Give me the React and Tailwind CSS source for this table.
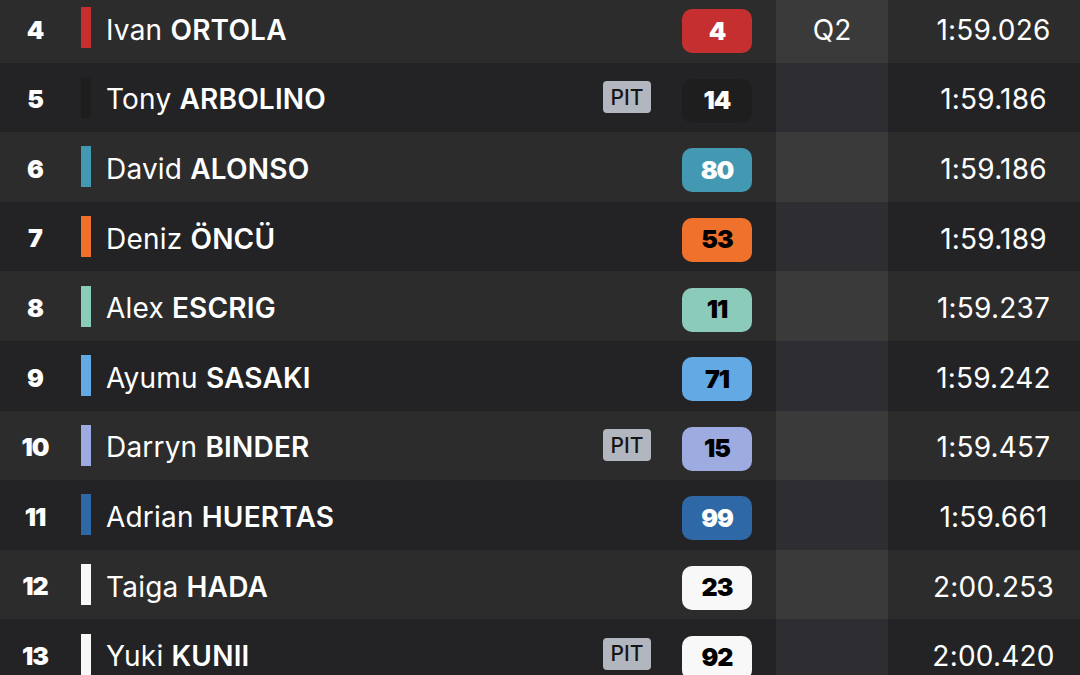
import React from "react";

const rows = [
  { pos: "4", first: "Ivan", last: "ORTOLA", num: "4", bar: "bg-[#c62f2f]", badge: "bg-[#c62f2f] text-white", pit: false, q: "Q2", time: "1:59.026" },
  { pos: "5", first: "Tony", last: "ARBOLINO", num: "14", bar: "bg-[#1e1e1f]", badge: "bg-[#1e1e1f] text-white", pit: true, q: "", time: "1:59.186" },
  { pos: "6", first: "David", last: "ALONSO", num: "80", bar: "bg-[#4499b2]", badge: "bg-[#4499b2] text-white", pit: false, q: "", time: "1:59.186" },
  { pos: "7", first: "Deniz", last: "ÖNCÜ", num: "53", bar: "bg-[#ef712b]", badge: "bg-[#ef712b] text-black", pit: false, q: "", time: "1:59.189" },
  { pos: "8", first: "Alex", last: "ESCRIG", num: "11", bar: "bg-[#8accb9]", badge: "bg-[#8accb9] text-black", pit: false, q: "", time: "1:59.237" },
  { pos: "9", first: "Ayumu", last: "SASAKI", num: "71", bar: "bg-[#63aae4]", badge: "bg-[#63aae4] text-black", pit: false, q: "", time: "1:59.242" },
  { pos: "10", first: "Darryn", last: "BINDER", num: "15", bar: "bg-[#9eabe0]", badge: "bg-[#9eabe0] text-black", pit: true, q: "", time: "1:59.457" },
  { pos: "11", first: "Adrian", last: "HUERTAS", num: "99", bar: "bg-[#2e68a6]", badge: "bg-[#2e68a6] text-white", pit: false, q: "", time: "1:59.661" },
  { pos: "12", first: "Taiga", last: "HADA", num: "23", bar: "bg-[#f8f8f8]", badge: "bg-[#f8f8f8] text-black", pit: false, q: "", time: "2:00.253" },
  { pos: "13", first: "Yuki", last: "KUNII", num: "92", bar: "bg-[#f8f8f8]", badge: "bg-[#f8f8f8] text-black", pit: true, q: "", time: "2:00.420" },
];

export default function App() {
  return (
    <div className="w-[1080px] h-[675px] overflow-hidden bg-[#232325] font-['Inter',sans-serif] text-white">
      <div className="-mt-[7px] flex flex-col">
        {rows.map((r, i) => {
          const light = i % 2 === 0;
          return (
            <div
              key={r.pos}
              className={`flex h-[69.6px] items-center ${light ? "bg-[#2c2c2c]" : "bg-[#232325]"}`}
            >
              <div className="w-[70px] shrink-0 text-center text-[25px] font-black tracking-[-1px] pt-[5px]">
                {r.pos}
              </div>
              <div className={`ml-[11px] w-[10px] h-[41px] shrink-0 ${r.bar}`} />
              <div className="ml-[15px] flex-1 min-w-0 pt-[4px] text-[28px] leading-none tracking-[0.2px] whitespace-nowrap">
                <span className="font-normal">{r.first} </span>
                <span className="font-semibold">{r.last}</span>
              </div>
              <div className="w-[48px] shrink-0 flex justify-center">
                {r.pit && (
                  <div className="w-[48px] h-[32px] rounded-[4px] bg-[#b2b7bf] text-[#151515] text-[21px] font-medium flex items-center justify-center">
                    PIT
                  </div>
                )}
              </div>
              <div
                className={`ml-[31px] mt-[7px] w-[70px] h-[44px] shrink-0 rounded-[10px] flex items-center justify-center text-[25px] font-black tracking-[-1px] ${r.badge}`}
              >
                {r.num}
              </div>
              <div
                className={`ml-[24px] w-[112px] shrink-0 h-full flex items-center justify-center pt-[4px] text-[28px] ${light ? "bg-[#3a3a3a]" : "bg-[#2e2d32]"}`}
              >
                {r.q}
              </div>
              <div className="w-[192px] shrink-0 pl-[19px] pt-[4px] text-center text-[28px] leading-none tracking-[0.2px]">
                {r.time}
              </div>
            </div>
          );
        })}
      </div>
    </div>
  );
}
